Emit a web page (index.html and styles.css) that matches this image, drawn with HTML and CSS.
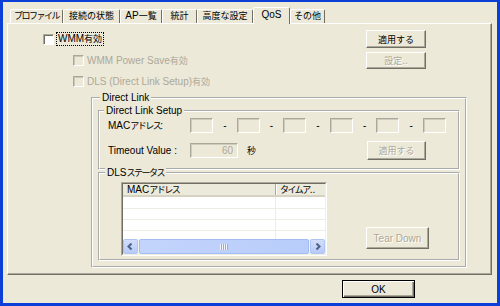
FILE: index.html
```html
<!DOCTYPE html>
<html lang="ja">
<head>
  <meta charset="UTF-8" />
  <meta name="viewport" content="width=device-width, initial-scale=1.0" />
  <title>QoS</title>
  <link rel="stylesheet" href="styles.css">
</head>
<body>
  <div class="window">
    <div class="tabs">
      <div class="tab t1"><span class="ja kana">プロファイル</span></div>
      <div class="tab t2"><span class="ja">接続の状態</span></div>
      <div class="tab t3">AP<span class="ja">一覧</span></div>
      <div class="tab t4"><span class="ja">統計</span></div>
      <div class="tab t5"><span class="ja">高度な設定</span></div>
      <div class="tab t6 active">QoS</div>
      <div class="tab t7"><span class="ja">その他</span></div>
    </div>

    <div class="panel">
      <div class="row row-wmm">
        <label class="check"><span class="box"></span><span class="focus">WMM<span class="ja">有効</span></span></label>
        <button class="btn btn-apply"><span class="ja">適用する</span></button>
      </div>
      <div class="row row-pwr">
        <label class="check disabled"><span class="box"></span><span>WMM Power Save<span class="ja">有効</span></span></label>
        <button class="btn btn-set" disabled><span class="ja">設定</span>..</button>
      </div>
      <div class="row row-dls">
        <label class="check disabled"><span class="box"></span><span>DLS (Direct Link Setup)<span class="ja">有効</span></span></label>
      </div>

      <div class="group group-link">
        <div class="group-title title-link">Direct Link</div>

        <div class="group group-setup">
          <div class="group-title">Direct Link Setup</div>
          <div class="mac-row">
            <span class="field-label">MAC<span class="ja kana">アドレス</span>:</span>
            <div class="mac-boxes">
              <span class="edit"></span><span class="dash">-</span>
              <span class="edit"></span><span class="dash">-</span>
              <span class="edit"></span><span class="dash">-</span>
              <span class="edit"></span><span class="dash">-</span>
              <span class="edit"></span><span class="dash">-</span>
              <span class="edit"></span>
            </div>
          </div>
          <div class="timeout-row">
            <span class="field-label">Timeout Value :</span>
            <span class="edit edit-wide">60</span>
            <span class="unit ja">秒</span>
            <button class="btn btn-apply2" disabled><span class="ja">適用する</span></button>
          </div>
        </div>

        <div class="group group-status">
          <div class="group-title title-status">DLS<span class="ja kana">ステータス</span></div>
          <div class="status-body">
            <div class="list">
              <div class="list-inner">
                <div class="list-head">
                  <div class="col c-mac">MAC<span class="ja kana">アドレス</span></div>
                  <div class="col c-time"><span class="ja kana">タイムア</span>..</div>
                </div>
                <div class="list-body">
                  <div class="list-row r1"><span class="cell c-mac"></span><span class="cell c-time"></span></div>
                  <div class="list-row"><span class="cell c-mac"></span><span class="cell c-time"></span></div>
                  <div class="list-row"><span class="cell c-mac"></span><span class="cell c-time"></span></div>
                  <div class="list-row last"><span class="cell c-mac"></span><span class="cell c-time"></span></div>
                </div>
                <div class="hscroll">
                  <span class="sb-btn">
                    <svg width="7" height="7" viewBox="0 0 7 7"><polyline points="4.5,0.5 1.5,3.5 4.5,6.5" fill="none" stroke="#4d6185" stroke-width="2"/></svg>
                  </span>
                  <span class="sb-thumb"><span class="grip"></span></span>
                  <span class="sb-btn">
                    <svg width="7" height="7" viewBox="0 0 7 7"><polyline points="2.5,0.5 5.5,3.5 2.5,6.5" fill="none" stroke="#4d6185" stroke-width="2"/></svg>
                  </span>
                </div>
              </div>
            </div>
            <button class="btn btn-tear" disabled>Tear Down</button>
          </div>
        </div>
      </div>
    </div>

    <div class="footer">
      <button class="btn btn-ok">OK</button>
    </div>
  </div>
</body>
</html>
```

FILE: styles.css
```css
* { box-sizing: border-box; }
body {
  margin: 0;
  font-family: "Liberation Sans", "Noto Sans CJK JP", sans-serif;
  font-size: 10px;
  color: #000;
}
.ja { font-size: 9px; }
.kana { letter-spacing: -1.5px; }
.window {
  width: 500px;
  height: 306px;
  background: #ece9d8;
  border: 3px solid #0b3fd8;
  border-top-width: 2px;
  padding: 5px 5px 0 4px;
  display: flex;
  flex-direction: column;
}

/* tabs */
.tabs {
  display: flex;
  align-items: flex-end;
  height: 16px;
  padding-left: 3px;
}
.tab {
  height: 14px;
  line-height: 12px;
  text-align: center;
  white-space: nowrap;
  border: 1px solid #fff;
  border-bottom: 0;
  border-right-color: #716f64;
  border-radius: 2px 2px 0 0;
}
.tab.active {
  position: relative;
  z-index: 1;
  height: 17px;
  margin-bottom: -1px;
  background: #ece9d8;
  line-height: 13px;
}
.t1 { width: 53px; }
.t2 { width: 57px; }
.t3 { width: 42px; }
.t4 { width: 35px; }
.t5 { width: 56px; }
.t6 { width: 37px; }
.t7 { width: 35px; }

.panel {
  height: 252px;
  border: 1px solid;
  border-color: #fff #716f64 #716f64 #fff;
  box-shadow: inset -1px -1px 0 #aca899;
  padding: 6px 0 0 35px;
}

/* top rows */
.row {
  display: flex;
  align-items: center;
  justify-content: space-between;
  padding-right: 65px;
}
.row-wmm { height: 18px; }
.row-pwr { height: 17px; margin-top: 4px; padding-left: 30px; }
.row-dls { height: 12px; margin-top: 6px; padding-left: 30px; }

.check {
  display: flex;
  align-items: center;
  gap: 3px;
  white-space: nowrap;
}
.box {
  width: 11px;
  height: 11px;
  background: #fff;
  border: 1px solid;
  border-color: #aca899 #fff #fff #aca899;
  box-shadow: inset 1px 1px 0 #716f64;
}
.check.disabled { color: #aca899; }
.check.disabled .box {
  background: #ece9d8;
  box-shadow: inset 1px 1px 0 #c9c6b6;
}
.focus {
  outline: 1px dotted #000;
  padding: 0 1px;
  line-height: 12px;
}

/* buttons */
.btn {
  font: inherit;
  padding: 0;
  color: #000;
  background: #ece9d8;
  border: 1px solid;
  border-color: #fff #716f64 #716f64 #fff;
  box-shadow: inset -1px -1px 0 #aca899;
}
.btn:disabled {
  color: #aca899;
  text-shadow: 1px 1px 0 #fff;
}
.btn-apply { width: 60px; height: 18px; }
.btn-set { width: 60px; height: 17px; }

/* group boxes */
.group { border: 2px groove #fff; }
.group-title {
  display: table;
  margin: -8px 0 0 4px;
  padding: 0 2px;
  line-height: 13px;
  background: #ece9d8;
  white-space: nowrap;
}
.title-link { margin-left: 2px; }
.title-status { margin-left: 5px; }

.group-link {
  width: 376px;
  height: 171px;
  margin: 10px 0 0 48px;
  padding: 0 5px;
}
.group-setup {
  height: 60px;
  margin-top: 6px;
}
.group-status {
  height: 89px;
  margin-top: 2px;
}

.mac-row {
  display: flex;
  align-items: center;
  height: 15px;
  margin-top: 1px;
  padding-left: 8px;
}
.field-label {
  width: 82px;
  white-space: nowrap;
}
.mac-boxes {
  display: flex;
  width: 256px;
}
.edit {
  width: 23px;
  height: 15px;
  border: 1px solid;
  border-color: #aca899 #fff #fff #aca899;
  box-shadow: inset 1px 1px 0 #cfccbd;
  color: #aca899;
  text-align: right;
  line-height: 13px;
  padding-right: 4px;
}
.edit-wide { width: 48px; }
.dash {
  flex: 1;
  text-align: center;
  line-height: 15px;
}
.timeout-row {
  display: flex;
  align-items: center;
  height: 19px;
  margin-top: 8px;
  padding-left: 8px;
}
.unit { margin-left: 9px; }
.btn-apply2 {
  width: 59px;
  height: 19px;
  margin-left: auto;
  margin-right: 32px;
}

/* status list */
.status-body {
  display: flex;
  margin-top: 2px;
}
.list {
  width: 206px;
  height: 74px;
  margin-left: 21px;
  border: 1px solid;
  border-color: #aca899 #fff #fff #aca899;
}
.list-inner {
  height: 100%;
  border: 1px solid;
  border-color: #716f64 #f1efe2 #f1efe2 #716f64;
  background: #fff;
  display: flex;
  flex-direction: column;
}
.list-head {
  display: flex;
  height: 13px;
  background: #ebeadb;
  border-bottom: 2px solid #d6d2c2;
}
.col {
  line-height: 11px;
  padding-left: 4px;
  white-space: nowrap;
  overflow: hidden;
}
.c-mac { width: 153px; }
.c-time { flex: 1; }
.list-head .c-mac { border-right: 1px solid #aca899; }
.list-head .c-time { border-left: 1px solid #fff; padding-left: 3px; }
.list-body {
  flex: 1;
  display: flex;
  flex-direction: column;
  overflow: hidden;
}
.list-row {
  display: flex;
  height: 11px;
  flex: none;
  border-bottom: 1px solid #efede2;
}
.list-row.r1 { height: 12px; }
.list-row.last { flex: 1; border-bottom: 0; }
.cell.c-mac { border-right: 1px solid #efede2; }

.hscroll {
  display: flex;
  height: 15px;
  background: #f4f3ee;
}
.sb-btn {
  width: 15px;
  display: flex;
  align-items: center;
  justify-content: center;
  background: linear-gradient(#d2ddfb, #b7cbf8);
  border: 1px solid #b0c4f4;
  border-radius: 2px;
}
.sb-thumb {
  flex: 1;
  margin: 0 1px;
  display: flex;
  align-items: center;
  justify-content: center;
  background: linear-gradient(90deg, #c3d4fc, #b8cdfa);
  border: 1px solid #a2bbf3;
  border-radius: 2px;
}
.grip {
  width: 8px;
  height: 6px;
  background: repeating-linear-gradient(90deg, #eef3fe 0 1px, #8eaef2 1px 2px);
}

.btn-tear {
  width: 63px;
  height: 22px;
  margin-left: 39px;
  align-self: flex-end;
  margin-bottom: 7px;
}

/* footer */
.footer {
  display: flex;
  justify-content: flex-end;
  padding: 5px 77px 0 0;
}
.btn-ok {
  width: 73px;
  height: 18px;
  border: 1px solid #000;
  box-shadow: inset 1px 1px 0 #fff, inset -1px -1px 0 #716f64, inset -2px -2px 0 #aca899;
}
```
